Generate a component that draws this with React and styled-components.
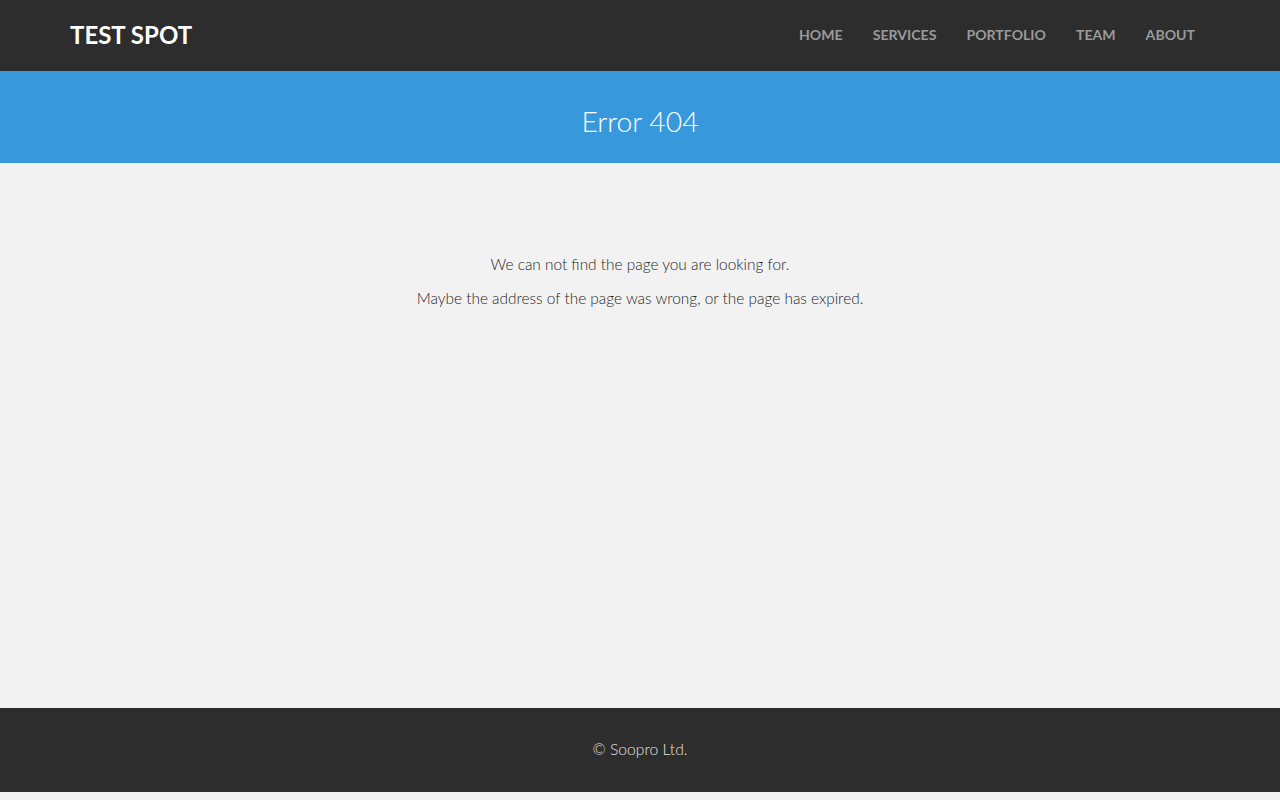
import React from 'react'
import styled, { createGlobalStyle } from 'styled-components'

const GlobalStyle = createGlobalStyle`
  html, body {
    margin: 0;
    padding: 0;
    background: #f2f2f2;
    font-family: Lato, "Open Sans", sans-serif;
  }
  * {
    box-sizing: border-box;
  }
`

const Page = styled.div`
  display: flex;
  flex-direction: column;
  min-height: 792px;
`

const Header = styled.header`
  background: #2d2d2d;
  height: 71px;
`

const Container = styled.div`
  width: 1170px;
  margin: 0 auto;
  padding: 0 15px;
`

const HeaderInner = styled(Container)`
  display: flex;
  align-items: center;
  justify-content: space-between;
  height: 100%;
  padding-bottom: 3px;
`

const Logo = styled.a`
  color: #fff;
  font-weight: 700;
  font-size: 24px;
  text-decoration: none;
`

const Nav = styled.nav`
  display: flex;
`

const NavLink = styled.a`
  color: #9a9a9a;
  font-weight: 700;
  font-size: 14.1px;
  text-transform: uppercase;
  padding: 0 15px;
  text-decoration: none;
`

const Banner = styled.section`
  background: #3799dc;
  height: 92px;
  display: flex;
  align-items: center;
  justify-content: center;
`

const Title = styled.h1`
  margin: 0;
  color: #fff;
  font-weight: 300;
  font-size: 28.3px;
  margin-top: 7px;
`

const Main = styled.main`
  flex: 1;
  padding: 89px 15px 0;
  text-align: center;
  color: #262626;
`

const Text = styled.p`
  margin: 0 0 10px;
  font-weight: 300;
  font-size: 15.4px;
  line-height: 24px;
`

const Footer = styled.footer`
  background: #2d2d2d;
  height: 84px;
  display: flex;
  align-items: center;
  justify-content: center;
  padding-bottom: 2px;
  color: #e0e0e0;
  font-weight: 300;
  font-size: 15.7px;
`

const links = ['Home', 'Services', 'Portfolio', 'Team', 'About']

export default function App () {
  return (
    <>
      <GlobalStyle />
      <Page>
        <Header>
          <HeaderInner>
            <Logo href='#'>TEST SPOT</Logo>
            <Nav>
              {links.map(item => (
                <NavLink key={item} href='#'>{item}</NavLink>
              ))}
            </Nav>
          </HeaderInner>
        </Header>
        <Banner>
          <Title>Error 404</Title>
        </Banner>
        <Main>
          <Text>We can not find the page you are looking for.</Text>
          <Text>Maybe the address of the page was wrong, or the page has expired.</Text>
        </Main>
        <Footer>© Soopro Ltd.</Footer>
      </Page>
    </>
  )
}
